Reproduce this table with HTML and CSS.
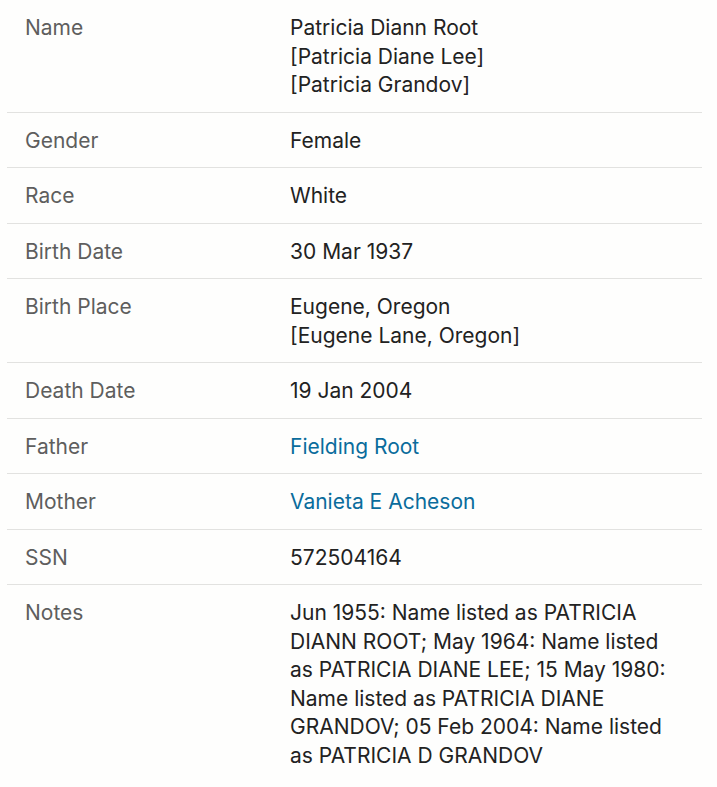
FILE: index.html
```html
<!DOCTYPE html>
<html lang="en">
<head>
<meta charset="utf-8">
<title>Record</title>
<link rel="stylesheet" href="styles.css">
</head>
<body>
<table class="facts">
  <tbody>
    <tr>
      <th>Name</th>
      <td>Patricia Diann Root<br>[Patricia Diane Lee]<br>[Patricia Grandov]</td>
    </tr>
    <tr>
      <th>Gender</th>
      <td>Female</td>
    </tr>
    <tr>
      <th>Race</th>
      <td>White</td>
    </tr>
    <tr>
      <th>Birth Date</th>
      <td>30 Mar 1937</td>
    </tr>
    <tr>
      <th>Birth Place</th>
      <td>Eugene, Oregon<br>[Eugene Lane, Oregon]</td>
    </tr>
    <tr>
      <th>Death Date</th>
      <td>19 Jan 2004</td>
    </tr>
    <tr>
      <th>Father</th>
      <td><a class="link" href="#">Fielding Root</a></td>
    </tr>
    <tr>
      <th>Mother</th>
      <td><a class="link" href="#">Vanieta E Acheson</a></td>
    </tr>
    <tr>
      <th>SSN</th>
      <td>572504164</td>
    </tr>
    <tr class="last">
      <th>Notes</th>
      <td>Jun 1955: Name listed as PATRICIA DIANN ROOT; May 1964: Name listed as PATRICIA DIANE LEE; 15 May 1980: Name listed as PATRICIA DIANE GRANDOV; 05 Feb 2004: Name listed as PATRICIA D GRANDOV</td>
    </tr>
  </tbody>
</table>
</body>
</html>
```
FILE: styles.css
```css
html, body {
  margin: 0;
  background: #fefefd;
}
body {
  padding: 0 15px 0 7px;
  font-family: Inter, "Noto Sans", "Liberation Sans", sans-serif;
  font-size: 21px;
  line-height: 28.5px;
  color: #222222;
}
.facts {
  width: 100%;
  border-collapse: collapse;
}
.facts th,
.facts td {
  padding: 14px 0 12px;
  vertical-align: top;
  text-align: left;
  border-bottom: 1px solid #e2e2e0;
}
.facts th {
  width: 265px;
  padding-left: 18px;
  font-weight: 400;
  color: #5e5e5e;
}
.facts td {
  padding-right: 30px;
}
.facts tr.last th,
.facts tr.last td {
  border-bottom: none;
}
.link {
  color: #0a6c9c;
  text-decoration: none;
}
```
